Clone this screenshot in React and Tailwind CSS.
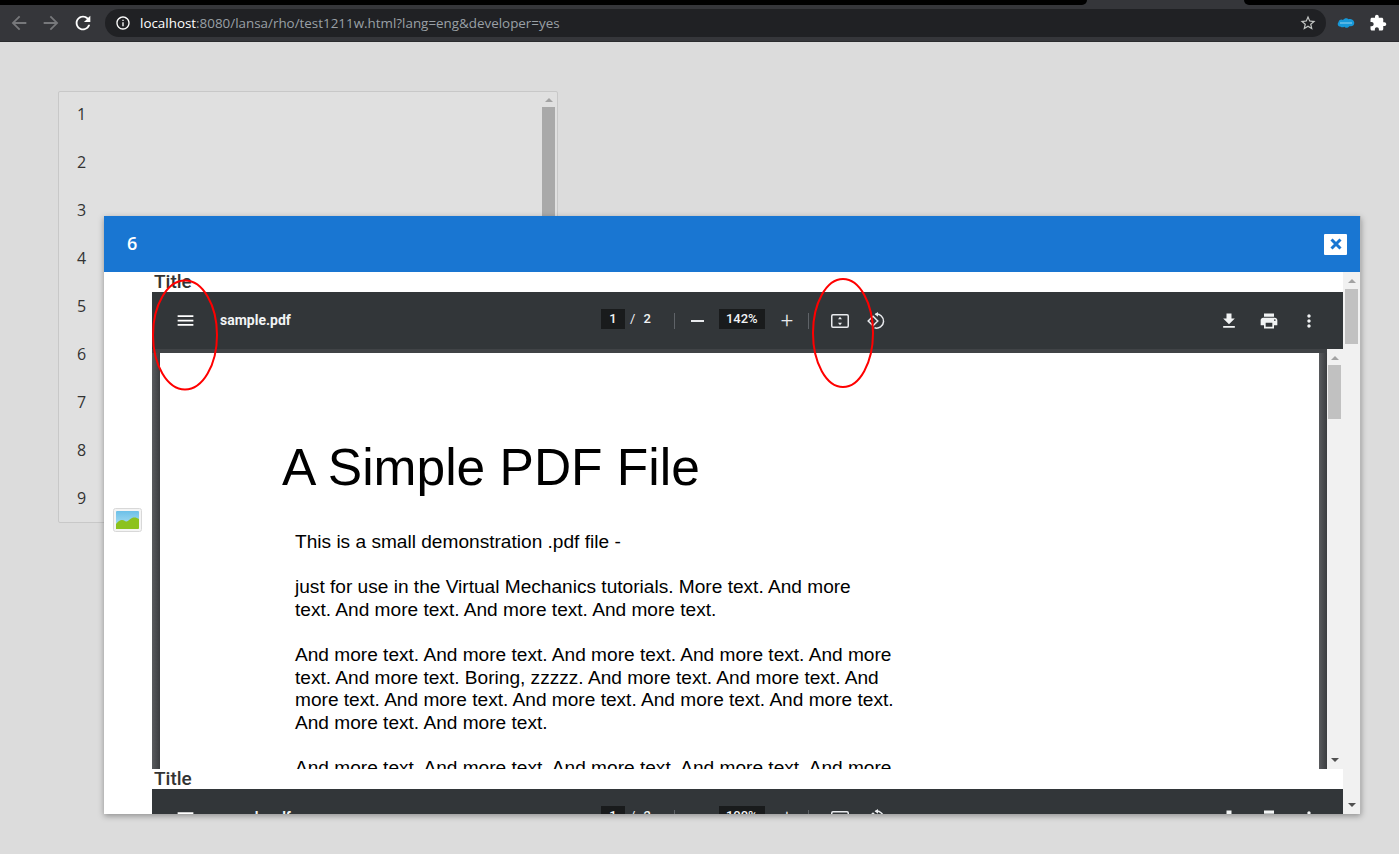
import React from 'react';

const rows = [1, 2, 3, 4, 5, 6, 7, 8, 9];

const Icon = ({ d, className }) => (
  <svg viewBox="0 0 24 24" className={className} fill="currentColor">
    <path d={d} />
  </svg>
);

const paths = {
  back: 'M20 11H7.83l5.59-5.59L12 4l-8 8 8 8 1.41-1.41L7.83 13H20v-2z',
  forward: 'M12 4l-1.41 1.41L16.17 11H4v2h12.17l-5.58 5.59L12 20l8-8z',
  reload: 'M17.65 6.35C16.2 4.9 14.21 4 12 4c-4.42 0-7.99 3.58-7.99 8s3.57 8 7.99 8c3.73 0 6.84-2.55 7.73-6h-2.08c-.82 2.33-3.04 4-5.65 4-3.31 0-6-2.69-6-6s2.69-6 6-6c1.66 0 3.14.69 4.22 1.78L13 11h7V4l-2.35 2.35z',
  info: 'M11 7h2v2h-2zm0 4h2v6h-2zm1-9C6.48 2 2 6.48 2 12s4.48 10 10 10 10-4.48 10-10S17.52 2 12 2zm0 18c-4.41 0-8-3.59-8-8s3.59-8 8-8 8 3.59 8 8-3.59 8-8 8z',
  star: 'M22 9.24l-7.19-.62L12 2 9.19 8.63 2 9.24l5.46 4.73L5.82 21 12 17.27 18.18 21l-1.63-7.03L22 9.24zM12 15.4l-3.76 2.27 1-4.28-3.32-2.88 4.38-.38L12 6.1l1.71 4.04 4.38.38-3.32 2.88 1 4.28L12 15.4z',
  puzzle: 'M20.5 11H19V7c0-1.1-.9-2-2-2h-4V3.5C13 2.12 11.88 1 10.5 1S8 2.12 8 3.5V5H4c-1.1 0-1.99.9-1.99 2v3.8H3.5c1.49 0 2.7 1.21 2.7 2.7s-1.21 2.7-2.7 2.7H2V20c0 1.1.9 2 2 2h3.8v-1.5c0-1.49 1.21-2.7 2.7-2.7 1.49 0 2.7 1.21 2.7 2.7V22H17c1.1 0 2-.9 2-2v-4h1.5c1.38 0 2.5-1.12 2.5-2.5S21.88 11 20.5 11z',
  menu: 'M3 18h18v-2H3v2zm0-5h18v-2H3v2zm0-7v2h18V6H3z',
  download: 'M19 9h-4V3H9v6H5l7 7 7-7zM5 18v2h14v-2H5z',
  print: 'M19 8H5c-1.66 0-3 1.34-3 3v6h4v4h12v-4h4v-6c0-1.66-1.34-3-3-3zm-3 11H8v-5h8v5zm3-7c-.55 0-1-.45-1-1s.45-1 1-1 1 .45 1 1-.45 1-1 1zm-1-9H6v4h12V3z',
  more: 'M12 8c1.1 0 2-.9 2-2s-.9-2-2-2-2 .9-2 2 .9 2 2 2zm0 2c-1.1 0-2 .9-2 2s.9 2 2 2 2-.9 2-2-.9-2-2-2zm0 6c-1.1 0-2 .9-2 2s.9 2 2 2 2-.9 2-2-.9-2-2-2z',
};

const ArrowUp = ({ className }) => (
  <div className={`h-0 w-0 border-x-[4px] border-b-[4px] border-x-transparent ${className}`} />
);

const ArrowDown = ({ className }) => (
  <div className={`h-0 w-0 border-x-[4px] border-t-[4px] border-x-transparent ${className}`} />
);

const BrowserBar = () => (
  <div className="h-[42px] shrink-0 bg-[#35363a] border-b border-[#2a2b2e]">
    <div className="flex h-[5px] justify-between">
      <div className="w-[1087px] rounded-br-[6px] bg-black" />
      <div className="w-[155px] rounded-bl-[6px] bg-black" />
    </div>
    <div className="flex h-[36px] items-center pl-[8px]">
      <Icon d={paths.back} className="h-[22px] w-[22px] text-[#77787b]" />
      <Icon d={paths.forward} className="ml-[10px] h-[22px] w-[22px] text-[#77787b]" />
      <Icon d={paths.reload} className="ml-[10px] h-[22px] w-[22px] text-white" />
      <div className="ml-[11px] flex h-[28px] w-[1221px] items-center rounded-full bg-[#202124] pl-[10px] pr-[9px]">
        <Icon d={paths.info} className="h-[16px] w-[16px] text-white" />
        <span className="ml-[9px] font-['Open_Sans',sans-serif] text-[13.4px] text-[#9aa0a6]">
          <span className="text-white">localhost</span>:8080/lansa/rho/test1211w.html?lang=eng&amp;developer=yes
        </span>
        <Icon d={paths.star} className="ml-auto h-[18px] w-[18px] text-[#c4c7c5]" />
      </div>
      <svg viewBox="0 0 24 16" className="ml-[11px] h-[16px] w-[18px]">
        <path d="M5 13C1 13 0 9 2 7 2 4 6 2 8 4 10 1 14 1 15 3 18 2 23 4 23 8 23 12 19 13 17 12 15 15 11 15 10 13 8 14 6 14 5 13Z" fill="#1798d8" />
        <path d="M4 8h16" stroke="#bfe6f7" strokeWidth="1" />
      </svg>
      <Icon d={paths.puzzle} className="ml-[14px] h-[18px] w-[18px] text-white" />
    </div>
  </div>
);

const ListPanel = () => (
  <div className="flex h-[432px] w-[500px] rounded-[2px] border border-[#c8c8c8] bg-[#e0e0e0]">
    <div className="-mt-[2px] flex-1">
      {rows.map((n) => (
        <div key={n} className="flex h-[48px] items-center pl-[18px] font-['Open_Sans',sans-serif] text-[16px] text-[#333]">
          {n}
        </div>
      ))}
    </div>
    <div className="mr-[1px] flex w-[15px] flex-col items-center pt-[6px]">
      <ArrowUp className="border-b-[#a3a3a3]" />
      <div className="mt-[5px] h-[110px] w-[13px] bg-[#a9a9a9]" />
    </div>
  </div>
);

const FitIcon = () => (
  <svg viewBox="0 0 20 18" className="h-[18px] w-[20px]" fill="none">
    <rect x="1.75" y="2.75" width="16.5" height="12.5" rx="1.2" stroke="currentColor" strokeWidth="1.5" />
    <path d="M10 4.8l2 2.4H8zM10 13.2l2-2.4H8z" fill="currentColor" />
  </svg>
);

const RotateIcon = () => (
  <svg viewBox="0 0 20 20" className="h-[20px] w-[20px]" fill="none" stroke="currentColor" strokeWidth="1.5">
    <path d="M9.5 3.2A7 7 0 1 1 8.5 16.8" />
    <path d="M12 1L8.6 3.3 12 5.8Z" fill="currentColor" stroke="none" />
    <path d="M7 5.2L11.8 10 7 14.8 2.2 10Z" />
  </svg>
);

const PdfToolbar = ({ zoom, total }) => (
  <div className="flex h-[57px] shrink-0 items-center bg-[#323639] font-['Roboto',sans-serif] text-[#f1f3f4]">
    <div className="flex w-[449px] shrink-0 items-center pl-[23px]">
      <Icon d={paths.menu} className="h-[21px] w-[21px] text-white" />
      <span className="ml-[24px] text-[14px] font-bold">sample.pdf</span>
    </div>
    <div className="mb-[3px] flex h-[20px] w-[24px] items-center justify-center bg-[#191b1c] text-[13px] font-medium">1</div>
    <span className="mb-[3px] ml-[5px] text-[13px]">/</span>
    <span className="mb-[3px] ml-[8px] text-[13px] font-medium">{total}</span>
    <div className="ml-[23px] h-[16px] w-px bg-[#5f6368]" />
    <div className="ml-[16px] h-[2px] w-[13px] bg-[#e8eaed]" />
    <div className="mb-[3px] ml-[15px] flex h-[20px] w-[46px] items-center justify-center bg-[#191b1c] text-[13px] font-medium">{zoom}</div>
    <div className="ml-[16px] text-[22px] font-light leading-none text-[#e8eaed]">+</div>
    <div className="ml-[15px] h-[16px] w-px bg-[#5f6368]" />
    <div className="ml-[21px] text-[#e8eaed]"><FitIcon /></div>
    <div className="ml-[16px] text-[#e8eaed]"><RotateIcon /></div>
    <div className="ml-auto flex items-center pr-[24px]">
      <Icon d={paths.download} className="h-[20px] w-[20px] text-[#f1f3f4]" />
      <Icon d={paths.print} className="ml-[20px] h-[20px] w-[20px] text-[#f1f3f4]" />
      <Icon d={paths.more} className="ml-[20px] h-[20px] w-[20px] text-[#f1f3f4]" />
    </div>
  </div>
);

const PdfPage = () => (
  <div className="min-w-0 flex-1 overflow-hidden bg-white pl-[122px] font-['Liberation_Sans',sans-serif] text-black">
    <div className="pt-[80px] text-[51.5px] leading-[68px] whitespace-nowrap">A Simple PDF File</div>
    <div className="ml-[13px] mt-[30px] text-[19.1px] leading-[22.6px] whitespace-nowrap">
      <div>This is a small demonstration .pdf file -</div>
      <div className="mt-[22.6px]">just for use in the Virtual Mechanics tutorials. More text. And more</div>
      <div>text. And more text. And more text. And more text.</div>
      <div className="mt-[22.6px]">And more text. And more text. And more text. And more text. And more</div>
      <div>text. And more text. Boring, zzzzz. And more text. And more text. And</div>
      <div>more text. And more text. And more text. And more text. And more text.</div>
      <div>And more text. And more text.</div>
      <div className="mt-[22.6px]">And more text. And more text. And more text. And more text. And more</div>
    </div>
  </div>
);

const PdfViewer = () => (
  <div className="flex h-[477px] shrink-0 flex-col">
    <PdfToolbar zoom="142%" total="2" />
    <div className="flex min-h-0 flex-1">
      <div className="flex min-w-0 flex-1 flex-col">
        <div className="h-[4px] shrink-0 bg-[#404346]" />
        <div className="flex min-h-0 flex-1">
          <div className="w-[8px] shrink-0 bg-gradient-to-r from-[#595b5e] to-[#3b3d40]" />
          <PdfPage />
          <div className="w-[8px] shrink-0 bg-gradient-to-r from-[#595b5e] to-[#3b3d40]" />
        </div>
      </div>
      <div className="flex w-[16px] shrink-0 flex-col items-center bg-[#f1f1f1] pr-[1px] pt-[7px]">
        <ArrowUp className="border-b-[#a3a3a3]" />
        <div className="mt-[5px] h-[54px] w-[13px] bg-[#c1c1c1]" />
        <ArrowDown className="mb-[7px] mt-auto border-t-[#505050]" />
      </div>
    </div>
  </div>
);

const ImageIcon = () => (
  <svg viewBox="0 0 29 24" className="ml-[9px] h-[24px] w-[29px] shrink-0 -translate-y-[1px]">
    <defs>
      <linearGradient id="sky" x1="0" y1="0" x2="0" y2="1">
        <stop offset="0" stopColor="#6cc0e8" />
        <stop offset="1" stopColor="#b6e3f4" />
      </linearGradient>
    </defs>
    <rect x="0.5" y="0.5" width="28" height="23" rx="2" fill="#f4f4f4" stroke="#d8d8d8" />
    <rect x="3" y="3" width="23" height="18" rx="1" fill="url(#sky)" />
    <path d="M3 16C6 12 9 11 12 13 15 15 16 11 19 10 22 9 24 10 26 11V20a1 1 0 0 1-1 1H3Z" fill="#8cc21e" />
  </svg>
);

const Modal = () => (
  <div className="absolute left-[104px] top-[216px] flex h-[598px] w-[1257px] flex-col border-r border-[#b8b8b8] bg-white shadow-[0_2px_6px_rgba(0,0,0,0.35)]">
    <div className="flex h-[56px] shrink-0 items-center justify-between bg-[#1976d2] pl-[23px] pr-[13px]">
      <span className="-mt-[2px] font-['Open_Sans',sans-serif] text-[18px] font-semibold text-white">6</span>
      <div className="flex h-[21px] w-[23px] items-center justify-center rounded-[1px] bg-white">
        <svg viewBox="0 0 12 12" className="h-[12px] w-[12px]" stroke="#1976d2" strokeWidth="3">
          <path d="M1.5 1.5l9 9M10.5 1.5l-9 9" />
        </svg>
      </div>
    </div>
    <div className="flex min-h-0 flex-1">
      <div className="flex min-w-0 flex-1 overflow-hidden">
        <div className="flex h-[497px] w-[48px] shrink-0 items-center">
          <ImageIcon />
        </div>
        <div className="min-w-0 flex-1">
          <div className="h-[20px] pl-[2px] font-['Roboto',sans-serif] text-[19px] font-medium leading-[20px] text-[#333]">Title</div>
          <PdfViewer />
          <div className="h-[20px] pl-[2px] font-['Roboto',sans-serif] text-[19px] font-medium leading-[20px] text-[#333]">Title</div>
          <PdfToolbar zoom="100%" total="2" />
        </div>
      </div>
      <div className="flex w-[17px] shrink-0 flex-col items-center bg-[#f1f1f1] pt-[7px]">
        <ArrowUp className="border-b-[#a3a3a3]" />
        <div className="mt-[6px] h-[55px] w-[13px] bg-[#c1c1c1]" />
        <ArrowDown className="mb-[7px] mt-auto border-t-[#505050]" />
      </div>
    </div>
  </div>
);

const Annotations = () => (
  <svg className="pointer-events-none absolute left-0 top-0 h-[854px] w-[1399px]" viewBox="0 0 1399 854" fill="none" stroke="#ff0000" strokeWidth="2">
    <ellipse cx="185" cy="335" rx="32" ry="54.5" />
    <ellipse cx="843" cy="333" rx="30" ry="54" />
  </svg>
);

export default function App() {
  return (
    <div className="relative flex h-[854px] w-[1399px] flex-col overflow-hidden bg-[#dcdcdc]">
      <BrowserBar />
      <div className="flex-1 pl-[58px] pt-[49px]">
        <ListPanel />
      </div>
      <Modal />
      <Annotations />
    </div>
  );
}
